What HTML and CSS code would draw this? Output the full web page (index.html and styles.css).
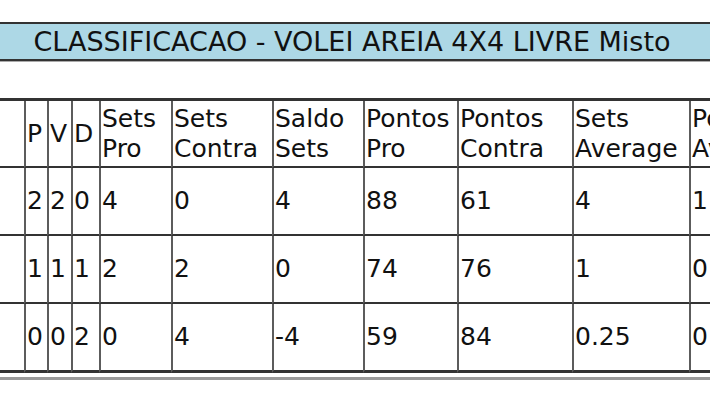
FILE: index.html
```html
<!DOCTYPE html>
<html lang="pt">
<head>
<meta charset="utf-8">
<title>Classificação</title>
<link rel="stylesheet" href="styles.css">
</head>
<body>
<div class="title">CLASSIFICACAO - VOLEI AREIA 4X4 LIVRE Misto</div>
<div class="standings">
  <div class="cell head first"></div>
  <div class="cell head">P</div>
  <div class="cell head">V</div>
  <div class="cell head">D</div>
  <div class="cell head">Sets<br>Pro</div>
  <div class="cell head">Sets<br>Contra</div>
  <div class="cell head">Saldo<br>Sets</div>
  <div class="cell head">Pontos<br>Pro</div>
  <div class="cell head">Pontos<br>Contra</div>
  <div class="cell head">Sets<br>Average</div>
  <div class="cell head">Pontos<br>Average</div>

  <div class="cell first"></div>
  <div class="cell">2</div>
  <div class="cell">2</div>
  <div class="cell">0</div>
  <div class="cell">4</div>
  <div class="cell">0</div>
  <div class="cell">4</div>
  <div class="cell">88</div>
  <div class="cell">61</div>
  <div class="cell">4</div>
  <div class="cell">1.4426</div>

  <div class="cell first"></div>
  <div class="cell">1</div>
  <div class="cell">1</div>
  <div class="cell">1</div>
  <div class="cell">2</div>
  <div class="cell">2</div>
  <div class="cell">0</div>
  <div class="cell">74</div>
  <div class="cell">76</div>
  <div class="cell">1</div>
  <div class="cell">0.9736</div>

  <div class="cell first last"></div>
  <div class="cell last">0</div>
  <div class="cell last">0</div>
  <div class="cell last">2</div>
  <div class="cell last">0</div>
  <div class="cell last">4</div>
  <div class="cell last">-4</div>
  <div class="cell last">59</div>
  <div class="cell last">84</div>
  <div class="cell last">0.25</div>
  <div class="cell last">0.7023</div>
</div>
<div class="rule"></div>
</body>
</html>
```
FILE: styles.css
```css
html, body {
  margin: 0;
  padding: 0;
  background: #ffffff;
  overflow: hidden;
}

body {
  width: 710px;
  height: 400px;
  font-family: "DejaVu Sans", Verdana, sans-serif;
  color: #111;
}

.title {
  margin-top: 22px;
  height: 35px;
  line-height: 35px;
  background: #add8e6;
  border-top: 2px solid #333;
  border-bottom: 2px solid #333;
  box-shadow: 0 1px 0 #aaa;
  text-align: center;
  font-size: 27px;
  padding-right: 6px;
  white-space: nowrap;
}

.standings {
  margin-top: 37px;
  width: 830px;
  display: grid;
  grid-template-columns: 24px 23px 24px 28px 72px 101px 91px 94px 115px 117px 120px;
  grid-template-rows: 67px 68px 68px 69px;
  border-top: 3px solid #333;
}

.cell {
  box-sizing: border-box;
  display: flex;
  align-items: center;
  padding: 0 0 0 1px;
  border-left: 2px solid #5c5c5c;
  border-bottom: 2px solid #333;
  font-size: 25px;
  line-height: 30px;
  white-space: nowrap;
  overflow: hidden;
}

.cell.first {
  border-left: none;
}

.cell.last {
  border-bottom: 3px solid #333;
}

.rule {
  margin-top: 4px;
  height: 3px;
  background: #9a9a9a;
}
```
